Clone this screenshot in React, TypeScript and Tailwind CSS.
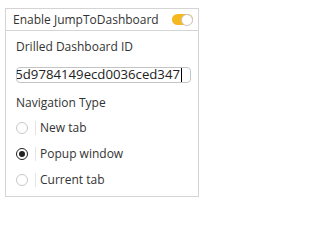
export default function App() {
  const options = [
    { label: "New tab", checked: false },
    { label: "Popup window", checked: true },
    { label: "Current tab", checked: false },
  ];
  return (
    <div className="h-[201px] w-[206px] bg-white pl-[5px] pt-[8px] font-['Open_Sans',sans-serif] text-[#333]">
      <div className="w-[194px] border border-[#d4d4d4]">
        <div className="flex h-[22px] items-center justify-between border-b border-[#d4d4d4] pl-[7px] pr-[5px] text-[12px]">
          <span>Enable JumpToDashboard</span>
          <span className="relative flex h-[11px] w-[21px] items-center rounded-full bg-[#f6b81f]">
            <span className="absolute right-0 h-[12px] w-[12px] rounded-full border border-[#c8c8c8] bg-white" />
          </span>
        </div>
        <div className="h-[165px] pl-[10px] pr-[7px] pt-[6px]">
          <div className="text-[12px] leading-[20px]">Drilled Dashboard ID</div>
          <div className="mt-[10px] flex h-[16px] items-center justify-end overflow-hidden rounded-[4px] border border-[#c4c4c4] pr-[8px] text-[13.2px] leading-none text-[#222]">
            <span className="shrink-0 whitespace-nowrap">5d9784149ecd0036ced347</span>
            <span className="ml-[1px] h-[14px] w-[1px] shrink-0 bg-black" />
          </div>
          <div className="mt-[10px] text-[12px] leading-[20px]">Navigation Type</div>
          <div className="mt-[5px] flex flex-col gap-[6px]">
            {options.map((o) => (
              <div key={o.label} className="flex h-[20px] items-center text-[12px]">
                <span
                  className={
                    o.checked
                      ? "flex h-[12px] w-[12px] items-center justify-center rounded-full border-[1.5px] border-[#222]"
                      : "h-[12px] w-[12px] rounded-full border border-[#c8c8c8]"
                  }
                >
                  {o.checked && <span className="h-[6px] w-[6px] rounded-full bg-[#222]" />}
                </span>
                <span className="ml-[7px] h-[14px] w-[1px] bg-[#e4e4e4]" />
                <span className="ml-[4px]">{o.label}</span>
              </div>
            ))}
          </div>
        </div>
      </div>
    </div>
  );
}
